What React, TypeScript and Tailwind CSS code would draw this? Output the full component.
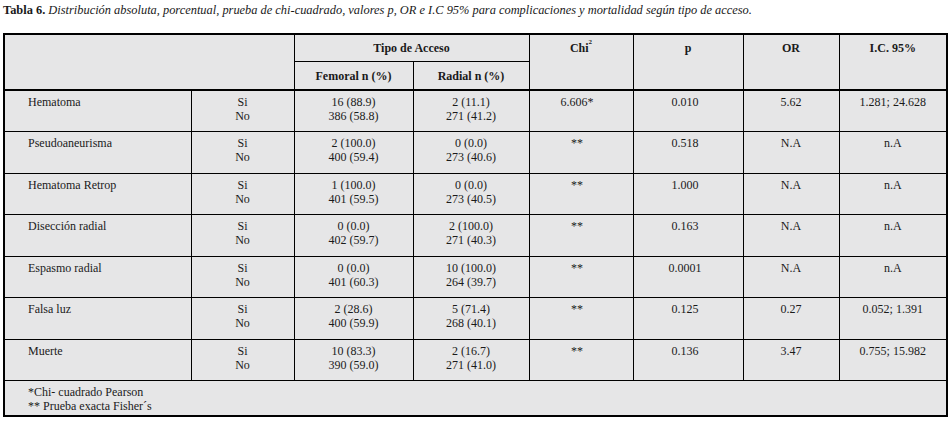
import React from 'react';

type Row = {
  label: string;
  fem: [string, string];
  rad: [string, string];
  chi: string;
  p: string;
  or: string;
  ic: string;
};

const rows: Row[] = [
  { label: 'Hematoma', fem: ['16 (88.9)', '386 (58.8)'], rad: ['2 (11.1)', '271 (41.2)'], chi: '6.606*', p: '0.010', or: '5.62', ic: '1.281; 24.628' },
  { label: 'Pseudoaneurisma', fem: ['2 (100.0)', '400 (59.4)'], rad: ['0 (0.0)', '273 (40.6)'], chi: '**', p: '0.518', or: 'N.A', ic: 'n.A' },
  { label: 'Hematoma Retrop', fem: ['1 (100.0)', '401 (59.5)'], rad: ['0 (0.0)', '273 (40.5)'], chi: '**', p: '1.000', or: 'N.A', ic: 'n.A' },
  { label: 'Disección radial', fem: ['0 (0.0)', '402 (59.7)'], rad: ['2 (100.0)', '271 (40.3)'], chi: '**', p: '0.163', or: 'N.A', ic: 'n.A' },
  { label: 'Espasmo radial', fem: ['0 (0.0)', '401 (60.3)'], rad: ['10 (100.0)', '264 (39.7)'], chi: '**', p: '0.0001', or: 'N.A', ic: 'n.A' },
  { label: 'Falsa luz', fem: ['2 (28.6)', '400 (59.9)'], rad: ['5 (71.4)', '268 (40.1)'], chi: '**', p: '0.125', or: '0.27', ic: '0.052; 1.391' },
  { label: 'Muerte', fem: ['10 (83.3)', '390 (59.0)'], rad: ['2 (16.7)', '271 (41.0)'], chi: '**', p: '0.136', or: '3.47', ic: '0.755; 15.982' },
];

const cell = 'border border-black align-top';

export default function App() {
  return (
    <div className="w-[949px] h-[425px] bg-white text-[#1a1a1a] font-[Liberation_Serif,serif] text-[12px] leading-[14px] overflow-hidden">
      <p className="pl-[3px] pt-[3px] h-[33px] text-[12.4px]">
        <span className="font-bold">Tabla 6. </span>
        <span className="italic">
          Distribución absoluta, porcentual, prueba de chi-cuadrado, valores p, OR e I.C 95% para complicaciones y mortalidad según tipo de acceso.
        </span>
      </p>
      <table className="ml-[3px] w-[943px] table-fixed border-collapse border-2 border-black bg-[#e6e6e7]">
        <colgroup>
          <col className="w-[187px]" />
          <col className="w-[103px]" />
          <col className="w-[119px]" />
          <col className="w-[116px]" />
          <col className="w-[104px]" />
          <col className="w-[110px]" />
          <col className="w-[96px]" />
          <col className="w-[108px]" />
        </colgroup>
        <thead className="font-bold">
          <tr className="h-[27px]">
            <th colSpan={2} rowSpan={2} className={`${cell} border-b-2`} />
            <th colSpan={2} className={`${cell} pt-[6px]`}>Tipo de Acceso</th>
            <th rowSpan={2} className={`${cell} border-b-2 pt-[6px]`}>
              Chi<sup className="text-[7px] align-[5px]">2</sup>
            </th>
            <th rowSpan={2} className={`${cell} border-b-2 pt-[6px]`}>p</th>
            <th rowSpan={2} className={`${cell} border-b-2 pt-[6px]`}>OR</th>
            <th rowSpan={2} className={`${cell} border-b-2 pt-[6px]`}>I.C. 95%</th>
          </tr>
          <tr className="h-[29px]">
            <th className={`${cell} border-b-2 pt-[7px]`}>Femoral n (%)</th>
            <th className={`${cell} border-b-2 pt-[7px]`}>Radial n (%)</th>
          </tr>
        </thead>
        <tbody>
          {rows.map((r) => (
            <tr key={r.label} className="h-[41.5px]">
              <td className={`${cell} pl-[23px] pt-[4px]`}>{r.label}</td>
              <td className={`${cell} text-center pt-[4px]`}>
                Si
                <br />
                No
              </td>
              <td className={`${cell} text-center pt-[4px]`}>
                {r.fem[0]}
                <br />
                {r.fem[1]}
              </td>
              <td className={`${cell} text-center pt-[4px]`}>
                {r.rad[0]}
                <br />
                {r.rad[1]}
              </td>
              <td className={`${cell} pt-[4px] text-center pr-[8px]`}>{r.chi}</td>
              <td className={`${cell} pt-[4px] text-center pr-[6px]`}>{r.p}</td>
              <td className={`${cell} pt-[4px] text-center`}>{r.or}</td>
              <td className={`${cell} pt-[4px] text-center`}>{r.ic}</td>
            </tr>
          ))}
          <tr className="h-[35px]">
            <td colSpan={8} className={`${cell} pl-[23px] pt-[4px]`}>
              *Chi- cuadrado Pearson
              <br />
              ** Prueba exacta Fisher´s
            </td>
          </tr>
        </tbody>
      </table>
    </div>
  );
}
